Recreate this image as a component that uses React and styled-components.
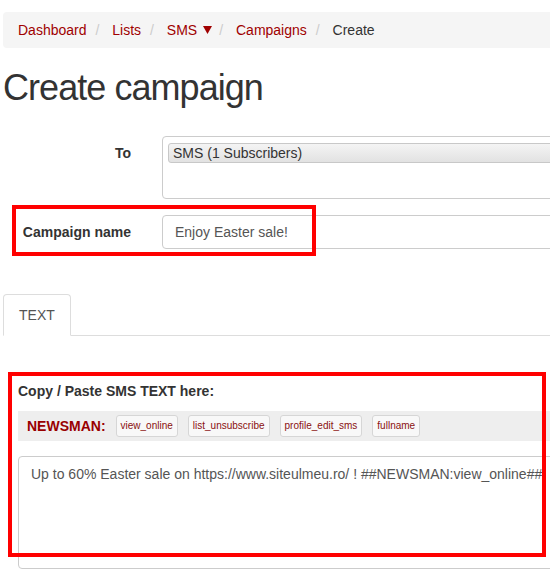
import React from 'react';
import styled, { createGlobalStyle } from 'styled-components';

const GlobalStyle = createGlobalStyle`
  * { box-sizing: border-box; }
  html, body {
    margin: 0;
    padding: 0;
    background: #fff;
    overflow: hidden;
  }
  body {
    font-family: "Liberation Sans", Arial, sans-serif;
    font-size: 14px;
    line-height: 20px;
    color: #333;
  }
`;

const Page = styled.div`
  position: relative;
  width: 680px;
  padding: 12px 0 0 3px;
`;

const Breadcrumb = styled.ol`
  display: flex;
  align-items: center;
  margin: 0 0 20px;
  padding: 8px 15px;
  list-style: none;
  background: #f5f5f5;
  border-radius: 4px;
`;

const Crumb = styled.li`
  display: flex;
  align-items: center;
  color: ${({ $active }) => ($active ? '#333' : '#a00000')};
`;

const Sep = styled.span`
  color: #ccc;
  margin: 0 9px 0 ${({ $tight }) => ($tight ? '7px' : '9px')};
`;

const Caret = styled.svg`
  width: 9px;
  height: 8px;
  margin-left: 6px;
  fill: #a00000;
`;

const Title = styled.h1`
  margin: 20px 0 10px;
  font-size: 36px;
  font-weight: 500;
  line-height: 1.1;
  letter-spacing: -0.95px;
  color: #333;
`;

const Form = styled.div`
  margin-top: 28px;
`;

const FormRow = styled.div`
  display: grid;
  grid-template-columns: 144px 1fr;
  margin-bottom: ${({ $gap }) => $gap || 0}px;
`;

const Label = styled.label`
  text-align: right;
  padding: 7px 16px 0 0;
  font-weight: bold;
`;

const Field = styled.div`
  padding-left: 15px;
`;

const MultiSelect = styled.div`
  height: 63px;
  padding: 6px 5px;
  border: 1px solid #ccc;
  border-radius: 4px;
  background: #fff;
`;

const Option = styled.div`
  height: 20px;
  padding: 0 4px;
  line-height: 18px;
  color: #333;
  border: 1px solid #c8c8c8;
  border-radius: 3px;
  background: linear-gradient(#f4f4f4, #e2e2e2);
`;

const Input = styled.div`
  height: 34px;
  padding: 6px 12px;
  border: 1px solid #ccc;
  border-radius: 4px;
  color: #555;
`;

const Tabs = styled.ul`
  display: flex;
  margin: 45px 0 0;
  padding: 0;
  list-style: none;
  border-bottom: 1px solid #ddd;
`;

const Tab = styled.li`
  margin-bottom: -1px;
  padding: 10px 15px;
  border: 1px solid #ddd;
  border-bottom-color: #fff;
  border-radius: 4px 4px 0 0;
  background: #fff;
  color: #555;
`;

const TabPane = styled.div`
  padding: 45px 0 0 15px;
`;

const PaneLabel = styled.div`
  font-weight: bold;
  margin-bottom: 10px;
`;

const TagBar = styled.div`
  display: flex;
  align-items: center;
  gap: 10px;
  height: 30px;
  padding: 0 9px;
  background: #eee;
`;

const Brand = styled.span`
  font-weight: bold;
  color: #900;
`;

const TagButton = styled.span`
  height: 22px;
  padding: 0 4px;
  font-size: 10px;
  line-height: 20px;
  color: #8a1010;
  border: 1px solid #d6d6d6;
  border-radius: 3px;
  background: #f8f8f8;
`;

const TextArea = styled.div`
  height: 113px;
  margin-top: 15px;
  padding: 7px 12px;
  border: 1px solid #ccc;
  border-radius: 4px;
  color: #555;
  white-space: nowrap;
`;

const Highlight = styled.div`
  position: absolute;
  left: ${({ $x }) => $x}px;
  top: ${({ $y }) => $y}px;
  width: ${({ $w }) => $w}px;
  height: ${({ $h }) => $h}px;
  border: 4px solid #f00;
  pointer-events: none;
`;

const tags = ['view_online', 'list_unsubscribe', 'profile_edit_sms', 'fullname'];

export default function App() {
  return (
    <Page>
      <GlobalStyle />
      <Breadcrumb>
        <Crumb>Dashboard</Crumb>
        <Sep>/&nbsp;</Sep>
        <Crumb>Lists</Crumb>
        <Sep>/&nbsp;</Sep>
        <Crumb>
          SMS
          <Caret viewBox="0 0 9 8">
            <polygon points="0,0 9,0 4.5,8" />
          </Caret>
        </Crumb>
        <Sep $tight>/&nbsp;</Sep>
        <Crumb>Campaigns</Crumb>
        <Sep>/&nbsp;</Sep>
        <Crumb $active>Create</Crumb>
      </Breadcrumb>

      <Title>Create campaign</Title>

      <Form>
        <FormRow $gap={16}>
          <Label>To</Label>
          <Field>
            <MultiSelect>
              <Option>SMS (1 Subscribers)</Option>
            </MultiSelect>
          </Field>
        </FormRow>
        <FormRow>
          <Label>Campaign name</Label>
          <Field>
            <Input>Enjoy Easter sale!</Input>
          </Field>
        </FormRow>
      </Form>

      <Tabs>
        <Tab>TEXT</Tab>
      </Tabs>

      <TabPane>
        <PaneLabel>Copy / Paste SMS TEXT here:</PaneLabel>
        <TagBar>
          <Brand>NEWSMAN:</Brand>
          {tags.map((t) => (
            <TagButton key={t}>{t}</TagButton>
          ))}
        </TagBar>
        <TextArea>
          Up to 60% Easter sale on https://www.siteulmeu.ro/ ! ##NEWSMAN:view_online##
        </TextArea>
      </TabPane>

      <Highlight $x={12} $y={205} $w={304} $h={51} />
      <Highlight $x={8} $y={372} $w={538} $h={185} />
    </Page>
  );
}
